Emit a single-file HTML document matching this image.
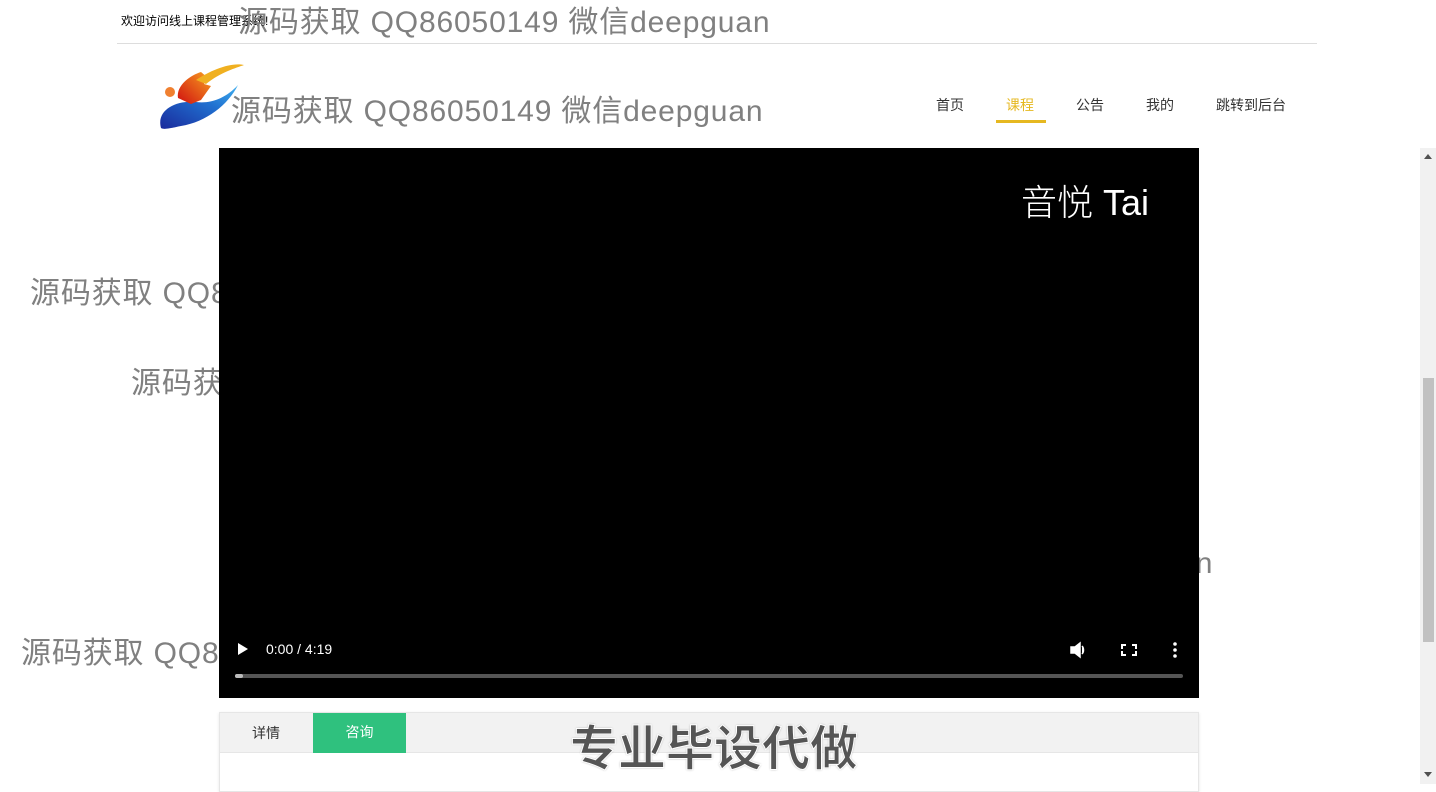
<!DOCTYPE html>
<html><head><meta charset="utf-8"><style>
*{margin:0;padding:0;box-sizing:border-box}
body{width:1436px;height:784px;overflow:hidden;background:#fff;font-family:"Liberation Sans","Noto Sans CJK SC",sans-serif;position:relative}
.wm{position:absolute;color:#808080;font-size:30px;letter-spacing:0.85px;white-space:nowrap;font-family:"Liberation Sans","Noto Sans CJK SC",sans-serif}
.nav a{position:absolute;top:95px;font-size:14px;color:#333;text-decoration:none}
</style></head><body>
<div style="position:absolute;left:121px;top:12px;font-size:12px;color:#000">欢迎访问线上课程管理系统!</div>
<div style="position:absolute;left:117px;top:43px;width:1200px;height:1px;background:#ddd"></div>
<svg style="position:absolute;left:156px;top:60px" width="95" height="75" viewBox="0 0 95 75">
<defs><linearGradient id="g1" x1="0" y1="1" x2="1" y2="0"><stop offset="0" stop-color="#1a2a9c"/><stop offset="0.6" stop-color="#2070d0"/><stop offset="1" stop-color="#40b0f0"/></linearGradient>
<linearGradient id="g2" x1="0" y1="1" x2="1" y2="0"><stop offset="0" stop-color="#d01010"/><stop offset="1" stop-color="#f8a020"/></linearGradient></defs>
<path d="M5 68 C0 50 20 40 40 42 C55 44 70 38 82 25 C72 45 50 62 25 66 C15 68 8 70 5 68Z" fill="url(#g1)"/>
<path d="M22 38 C20 25 35 15 45 12 L52 18 L48 24 L55 26 L45 40 L35 44 Z" fill="url(#g2)"/>
<path d="M40 20 C55 10 75 2 88 5 C80 8 65 12 50 24Z" fill="#f0b020"/>
<circle cx="14" cy="32" r="5" fill="#f08030"/>
</svg>
<div class="wm" style="left:238px;top:-3px">源码获取 QQ86050149 微信deepguan</div>
<div class="wm" style="left:231px;top:86px">源码获取 QQ86050149 微信deepguan</div>
<div class="nav">
<a style="left:936px">首页</a><a style="left:1006px;color:#e6b820">课程</a><a style="left:1076px">公告</a><a style="left:1146px">我的</a><a style="left:1216px">跳转到后台</a>
</div>
<div style="position:absolute;left:996px;top:120px;width:50px;height:3px;background:#e6b820"></div>
<div class="wm" style="left:30px;top:268px">源码获取 QQ86050149</div>
<div class="wm" style="left:131px;top:358px">源码获取 QQ86050149</div>
<div class="wm" style="left:21px;top:628px">源码获取 QQ86050149</div>
<div class="wm" style="left:1073px;top:547px">deepguan</div>
<div style="position:absolute;left:219px;top:148px;width:980px;height:550px;background:#000">
<div style="position:absolute;left:802px;top:26px;color:#fff;font-size:36px;font-family:'Liberation Sans','Noto Sans CJK SC',sans-serif;font-weight:300">音悦 Tai</div>
<div style="position:absolute;left:19px;top:495px;width:0;height:0;border-left:10px solid #fff;border-top:6px solid transparent;border-bottom:6px solid transparent"></div>
<div style="position:absolute;left:47px;top:493px;color:#fff;font-size:14px">0:00 / 4:19</div>
<svg style="position:absolute;left:850px;top:493px" width="110" height="18" viewBox="0 0 110 18" fill="#fff">
<path d="M2 6h4l5-4v14l-5-4H2z M13 5c2 2 2 6 0 8" stroke="#fff" stroke-width="1.5" fill-rule="evenodd"/>
<path d="M52 3h5v2h-3v3h-2z M63 3h5v5h-2V5h-3z M52 10h2v3h3v2h-5z M66 10h2v5h-5v-2h3z"/>
<circle cx="106" cy="3" r="1.8"/><circle cx="106" cy="9" r="1.8"/><circle cx="106" cy="15" r="1.8"/>
</svg>
<div style="position:absolute;left:16px;top:526px;width:948px;height:4px;background:#555;border-radius:2px"></div>
<div style="position:absolute;left:16px;top:526px;width:8px;height:4px;background:#bbb;border-radius:2px"></div>
</div>
<div style="position:absolute;left:219px;top:712px;width:980px;height:80px;border:1px solid #e6e6e6;box-shadow:0 1px 3px rgba(0,0,0,.1)">
<div style="height:40px;background:#f2f2f2;border-bottom:1px solid #e6e6e6;position:relative">
<div style="position:absolute;left:32px;top:10px;font-size:14px;color:#333">详情</div>
<div style="position:absolute;left:93px;top:0;width:93px;height:40px;background:#2fc17e;color:#fff;font-size:14px;text-align:center;line-height:38px">咨询</div>
</div></div>
<div style="position:absolute;left:570px;top:712px;font-size:48px;font-weight:bold;color:#555;-webkit-text-stroke:1px #fff;text-shadow:0 0 2px #999;font-family:'Noto Sans CJK SC',sans-serif;line-height:64px">专业毕设代做</div>
<div style="position:absolute;left:1420px;top:148px;width:16px;height:636px;background:#f1f1f1"></div>
<div style="position:absolute;left:1423px;top:378px;width:11px;height:264px;background:#c1c1c1"></div>
<div style="position:absolute;left:1424px;top:154px;width:0;height:0;border-bottom:5px solid #505050;border-left:4px solid transparent;border-right:4px solid transparent"></div>
<div style="position:absolute;left:1424px;top:772px;width:0;height:0;border-top:5px solid #505050;border-left:4px solid transparent;border-right:4px solid transparent"></div>
</body></html>
